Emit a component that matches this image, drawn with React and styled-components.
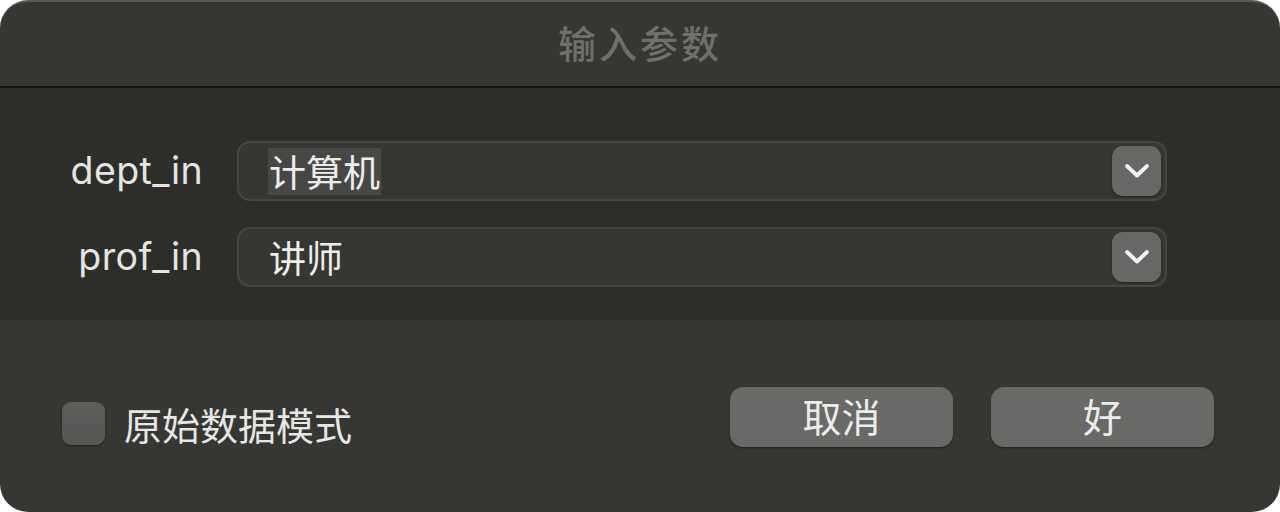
import React from "react";
import styled, { createGlobalStyle } from "styled-components";

const GlobalStyle = createGlobalStyle`
  html, body {
    margin: 0;
    padding: 0;
    background: #ffffff;
  }
  body {
    font-family: "Inter", "Noto Sans CJK SC", sans-serif;
  }
`;

const fields = [
  { name: "dept_in", value: "计算机", selected: true },
  { name: "prof_in", value: "讲师", selected: false },
];

const Chevron = () => (
  <svg width="26" height="16" viewBox="0 0 26 16">
    <polyline
      points="3,3 13,12.5 23,3"
      fill="none"
      stroke="#f2f2f2"
      strokeWidth="3.8"
      strokeLinecap="round"
      strokeLinejoin="round"
    />
  </svg>
);

//parameter dialog, dark mode
const App = () => {
  return (
    <>
      <GlobalStyle />
      <Window>
        <TitleBar>输入参数</TitleBar>
        <Fields>
          {fields.map((field) => (
            <Row key={field.name}>
              <Label>{field.name}</Label>
              <Combo>
                <Value selected={field.selected}>{field.value}</Value>
                <DropButton>
                  <Chevron />
                </DropButton>
              </Combo>
            </Row>
          ))}
        </Fields>
        <Footer>
          <CheckLabel>
            <CheckBox />
            <span>原始数据模式</span>
          </CheckLabel>
          <Buttons>
            <Button>取消</Button>
            <Button>好</Button>
          </Buttons>
        </Footer>
      </Window>
    </>
  );
};

const Window = styled.div`
  width: 1280px;
  height: 512px;
  box-sizing: border-box;
  border-radius: 28px;
  overflow: hidden;
  background: #363632;
  border-top: 2px solid #5a5a57;
  display: flex;
  flex-direction: column;
`;
const TitleBar = styled.div`
  height: 86px;
  flex-shrink: 0;
  box-sizing: border-box;
  display: flex;
  align-items: center;
  justify-content: center;
  font-family: "Noto Sans CJK SC", sans-serif;
  font-size: 38px;
  font-weight: 500;
  color: #6f6f6b;
  letter-spacing: 3px;
  border-bottom: 2px solid #121211;
  padding-bottom: 6px;
`;
const Fields = styled.div`
  height: 232px;
  flex-shrink: 0;
  background: #2d2d29;
  padding: 53px 0 0 0;
  box-sizing: border-box;
  display: flex;
  flex-direction: column;
  gap: 26px;
`;
const Row = styled.div`
  display: grid;
  grid-template-columns: 203px 930px;
  column-gap: 34px;
  align-items: center;
`;
const Label = styled.div`
  text-align: right;
  font-size: 37.5px;
  color: #e4e4e2;
  letter-spacing: 0.4px;
  padding-bottom: 2px;
`;
const Combo = styled.div`
  height: 60px;
  box-sizing: border-box;
  border: 2px solid #454541;
  border-radius: 13px;
  background: #363632;
  display: flex;
  align-items: center;
  justify-content: space-between;
  padding: 0 4px 0 29px;
`;
const Value = styled.span`
  font-family: "Noto Sans CJK SC", sans-serif;
  font-size: 37px;
  line-height: 47px;
  color: #ededeb;
  padding: 0 1px;
  background: ${(p) => (p.selected ? "#474745" : "transparent")};
`;
const DropButton = styled.div`
  width: 49px;
  height: 50px;
  border-radius: 11px;
  background: #676765;
  box-shadow: 0 1px 2px rgba(0, 0, 0, 0.4);
  display: flex;
  align-items: center;
  justify-content: center;
`;
const Footer = styled.div`
  flex: 1;
  display: flex;
  align-items: center;
  justify-content: space-between;
  padding: 2px 66px 0 62px;
`;
const CheckLabel = styled.label`
  display: flex;
  align-items: center;
  gap: 19px;
  font-family: "Noto Sans CJK SC", sans-serif;
  font-size: 38px;
  color: #e6e6e4;
  margin-top: 12px;
`;
const CheckBox = styled.span`
  width: 43px;
  height: 43px;
  border-radius: 9px;
  background: linear-gradient(#5e5e5c, #555553);
  box-shadow: 0 1px 2px rgba(0, 0, 0, 0.45);
`;
const Buttons = styled.div`
  display: flex;
  gap: 38px;
`;
const Button = styled.button`
  width: 223px;
  height: 60px;
  border: none;
  border-radius: 13px;
  background: #696967;
  box-shadow: 0 1px 2px rgba(0, 0, 0, 0.45);
  font-family: "Noto Sans CJK SC", sans-serif;
  font-size: 39px;
  font-weight: 400;
  color: #ececea;
  padding: 0 0 4px 0;
`;

export default App;
